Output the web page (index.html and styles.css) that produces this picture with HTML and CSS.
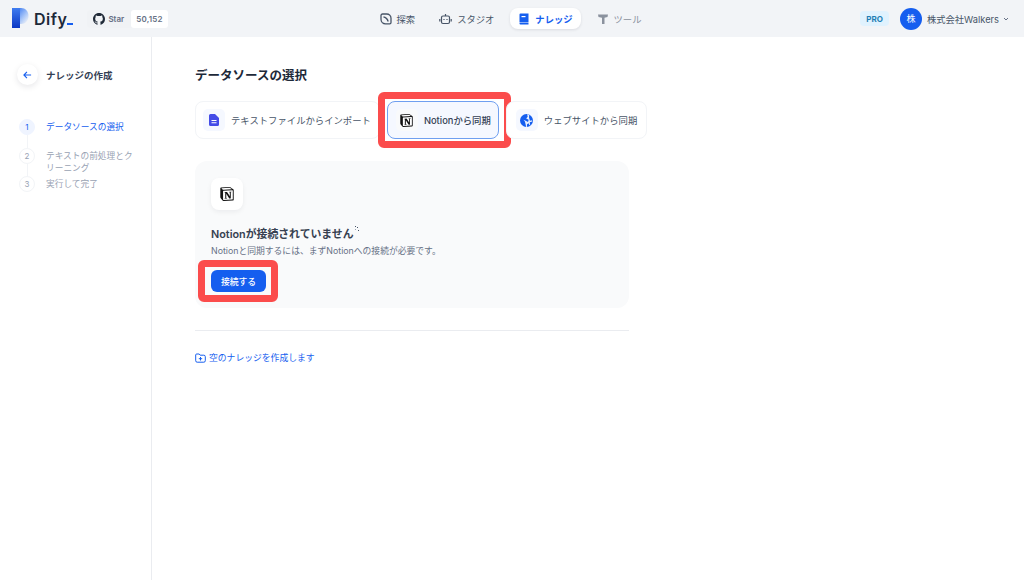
FILE: index.html
```html
<!DOCTYPE html>
<html lang="ja">
<head>
    <meta charset="UTF-8">
    <title>Dify ナレッジの作成</title>
    <link rel="stylesheet" href="styles.css">
</head>
<body>

<header class="topbar">
    <div class="brand">
        <svg class="logo-mark" width="17" height="20" viewBox="0 0 17 20">
            <defs>
                <linearGradient id="logoStem" x1="0" y1="0" x2="0" y2="1">
                    <stop offset="0" stop-color="#3f7cf0"/>
                    <stop offset="1" stop-color="#0b37c4"/>
                </linearGradient>
                <linearGradient id="logoBowl" x1="0" y1="0" x2="0.8" y2="1">
                    <stop offset="0" stop-color="#3f7cf0"/>
                    <stop offset="0.6" stop-color="#a9c6f8"/>
                    <stop offset="1" stop-color="#f2f4f7"/>
                </linearGradient>
            </defs>
            <path d="M6 0h3c4.500 0 7.500 3.500 7.500 8s-3 8-7.500 8H6z" fill="url(#logoBowl)"/>
            <rect x="0" y="0" width="8" height="20" fill="url(#logoStem)"/>
        </svg>
        <span class="logo-text">Dify<span class="logo-dash"></span></span>
        <div class="github">
            <span class="star">
                <svg width="12" height="12" viewBox="0 0 16 16"><path fill="#1f2937" d="M8 0C3.580 0 0 3.580 0 8c0 3.540 2.290 6.530 5.470 7.590.4.070.55-.17.55-.38 0-.19-.01-.82-.01-1.490-2.010.370-2.530-.49-2.690-.94-.09-.23-.48-.94-.82-1.130-.28-.15-.68-.52-.01-.53.63-.01 1.080.58 1.230.82.720 1.210 1.870.870 2.330.66.070-.52.280-.87.510-1.070-1.780-.2-3.640-.89-3.640-3.950 0-.87.31-1.590.82-2.150-.08-.2-.36-1.020.08-2.120 0 0 .67-.21 2.200.82a7.600 7.600 0 0 1 4 0c1.530-1.040 2.200-.82 2.200-.82.44 1.100.16 1.920.08 2.120.51.560.82 1.270.82 2.150 0 3.070-1.870 3.750-3.650 3.950.29.250.54.730.54 1.480 0 1.070-.01 1.930-.01 2.200 0 .21.15.46.55.38A8.010 8.010 0 0 0 16 8c0-4.420-3.580-8-8-8z"/></svg>
                Star
            </span>
            <span class="count">50,152</span>
        </div>
    </div>

    <nav class="mainnav">
        <a class="nav-item explore">
            <svg width="12" height="12" viewBox="0 0 12 12" fill="none" stroke="#475467" stroke-width="1.300"><path d="M2.500 1h4.200A4.300 4.300 0 0 1 11 5.300v4.200a1.300 1.300 0 0 1-1.300 1.300H5.500A4.500 4.500 0 0 1 1 6.300V2.500A1.500 1.500 0 0 1 2.500 1z"/><path d="M3.500 4c2 0 4.500 2.500 4.500 4.500" stroke-width="1.500"/></svg>
            探索
        </a>
        <a class="nav-item">
            <svg width="13" height="12" viewBox="0 0 13 12" fill="none" stroke="#475467" stroke-width="1.200"><rect x="2.500" y="3" width="8" height="7.500" rx="1.500"/><path d="M6.500 3V1M.8 6v2.500M12.200 6v2.500"/><path d="M5 6v1M8 6v1"/></svg>
            スタジオ
        </a>
        <a class="nav-item active">
            <svg width="12" height="12" viewBox="0 0 12 12"><path fill="#155eef" d="M1.500 1.500A1 1 0 0 1 2.500.5h8v8.500h-8a1 1 0 0 0-1 .6z"/><path fill="#155eef" d="M1.500 10a1 1 0 0 1 1-.5h8v2h-8a1 1 0 0 1-1-1z"/><rect x="3.500" y="3" width="4" height="1.200" fill="#fff"/></svg>
            ナレッジ
        </a>
        <a class="nav-item muted">
            <svg width="12" height="12" viewBox="0 0 12 12"><path fill="#8b929e" d="M1 1.500h10l-.5 2.500-3 .8v6.200H5V4.800L1.500 4z"/></svg>
            ツール
        </a>
    </nav>

    <div class="account">
        <span class="plan">PRO</span>
        <span class="avatar">株</span>
        <span class="org">株式会社Walkers</span>
        <svg width="8" height="8" viewBox="0 0 8 8" fill="none" stroke="#667085" stroke-width="1"><path d="M2 3l2 2 2-2"/></svg>
    </div>
</header>

<div class="page">
    <aside class="sidebar">
        <div class="side-title">
            <span class="back">
                <svg width="9" height="8" viewBox="0 0 11 10" fill="none" stroke="#155eef" stroke-width="1.400"><path d="M10 5H1.200M4.800 1.200L1 5l3.800 3.800"/></svg>
            </span>
            ナレッジの作成
        </div>
        <ol class="steps">
            <li class="step current"><span class="num">1</span><span class="step-label">データソースの選択</span></li>
            <li class="step"><span class="num">2</span><span class="step-label">テキストの前処理とクリーニング</span></li>
            <li class="step"><span class="num">3</span><span class="step-label">実行して完了</span></li>
        </ol>
    </aside>

    <main class="content">
        <h1 class="heading">データソースの選択</h1>

        <div class="tabs">
            <div class="tab first">
                <span class="tab-icon">
                    <svg width="10" height="12" viewBox="0 0 10 12"><path fill="#444ce7" d="M1.500 0H6l4 4v6.500A1.500 1.500 0 0 1 8.500 12h-7A1.500 1.500 0 0 1 0 10.500v-9A1.500 1.500 0 0 1 1.500 0z"/><path fill="#fff" d="M2.500 6h5v1h-5zM2.500 8.200h5v1h-5z"/></svg>
                </span>
                テキストファイルからインポート
            </div>
            <div class="tab selected marked">
                <span class="tab-icon">
                    <svg width="13" height="13" viewBox="0 0 24 24"><path fill="#fff" d="M2 2l16-1.500 5 4V22L6 23.500 1.500 18z"/><path fill="#111" d="M4.459 4.208c.746.606 1.026.56 2.428.466l13.215-.793c.28 0 .047-.28-.046-.326L17.860 1.968c-.42-.326-.981-.7-2.055-.607L3.010 2.295c-.466.046-.56.28-.374.466zm.793 3.080v13.904c0 .747.373 1.027 1.214.98l14.523-.84c.841-.046.935-.56.935-1.167V6.354c0-.606-.233-.933-.748-.887l-15.177.887c-.56.047-.747.327-.747.933zm14.337.745c.093.42 0 .84-.42.888l-.7.14v10.264c-.608.327-1.168.514-1.635.514-.748 0-.935-.234-1.495-.933l-4.577-7.186v6.952L12.210 19s0 .84-1.168.84l-3.222.186c-.093-.186 0-.653.327-.746l.84-.233V9.854L7.822 9.760c-.094-.42.14-1.026.793-1.073l3.456-.233 4.764 7.279v-6.440l-1.215-.139c-.093-.514.28-.887.747-.933zM1.936 1.035l13.310-.98c1.634-.14 2.055-.047 3.082.7l4.249 2.986c.7.513.934.653.934 1.213v16.378c0 1.026-.373 1.634-1.680 1.726l-15.458.934c-.98.047-1.448-.093-1.962-.747l-3.129-4.060c-.56-.747-.793-1.306-.793-1.960V2.667c0-.839.374-1.540 1.447-1.632z"/></svg>
                </span>
                Notionから同期
            </div>
            <div class="tab last">
                <span class="tab-icon">
                    <svg width="13" height="13" viewBox="0 0 12 12"><circle cx="6" cy="6" r="6" fill="#155eef"/><path fill="#e8f0fe" d="M6.600.2l.5 2.300-1.400 1.700 2.300 1.100-.6 2L5.700 6.500 3.200 5.300 4.500 7l.6 2.200.6 2.800h.7L6.500 9.500 8 8.500l.5 1.800.9-.6-.4-2 2.300-.8-.1-1.200-2 .5-.5-1.700L8.300 3.200 8.500.7z"/></svg>
                </span>
                ウェブサイトから同期
            </div>
        </div>

        <section class="connect-card">
            <span class="card-icon">
                <svg width="14" height="14" viewBox="0 0 24 24"><path fill="#fff" d="M2 2l16-1.500 5 4V22L6 23.500 1.500 18z"/><path fill="#111" d="M4.459 4.208c.746.606 1.026.56 2.428.466l13.215-.793c.28 0 .047-.28-.046-.326L17.860 1.968c-.42-.326-.981-.7-2.055-.607L3.010 2.295c-.466.046-.56.28-.374.466zm.793 3.080v13.904c0 .747.373 1.027 1.214.98l14.523-.84c.841-.046.935-.56.935-1.167V6.354c0-.606-.233-.933-.748-.887l-15.177.887c-.56.047-.747.327-.747.933zm14.337.745c.093.42 0 .84-.42.888l-.7.14v10.264c-.608.327-1.168.514-1.635.514-.748 0-.935-.234-1.495-.933l-4.577-7.186v6.952L12.210 19s0 .84-1.168.84l-3.222.186c-.093-.186 0-.653.327-.746l.84-.233V9.854L7.822 9.760c-.094-.42.14-1.026.793-1.073l3.456-.233 4.764 7.279v-6.440l-1.215-.139c-.093-.514.28-.887.747-.933zM1.936 1.035l13.310-.98c1.634-.14 2.055-.047 3.082.7l4.249 2.986c.7.513.934.653.934 1.213v16.378c0 1.026-.373 1.634-1.680 1.726l-15.458.934c-.98.047-1.448-.093-1.962-.747l-3.129-4.060c-.56-.747-.793-1.306-.793-1.960V2.667c0-.839.374-1.540 1.447-1.632z"/></svg>
            </span>
            <div class="card-title">Notionが接続されていません<span class="sparkle"></span></div>
            <div class="card-desc">Notionと同期するには、まずNotionへの接続が必要です。</div>
            <button class="connect marked">接続する</button>
        </section>

        <hr class="divider">

        <a class="empty-link">
            <svg width="11" height="10" viewBox="0 0 11 10" fill="none" stroke="#155eef" stroke-width="1"><path d="M.7 2a1 1 0 0 1 1-1h2.500l1 1.200h3.600a1.500 1.500 0 0 1 1.500 1.500v4a1.500 1.500 0 0 1-1.500 1.500H2.200A1.500 1.500 0 0 1 .7 7.700z"/><path d="M5.500 4v3.500M3.800 5.700h3.400"/></svg>
            空のナレッジを作成します
        </a>
    </main>
</div>

</body>
</html>
```

FILE: styles.css
```css
* {
    box-sizing: border-box;
}
body {
    font-family: Inter, "Noto Sans CJK JP", sans-serif;
    margin: 0;
    width: 1024px;
    height: 580px;
    overflow: hidden;
    background-color: #fff;
    color: #1d2939;
}
.topbar {
    display: grid;
    grid-template-columns: 1fr auto 1fr;
    align-items: center;
    height: 37px;
    padding: 0 14px 0 12px;
    background-color: #f2f4f7;
}
.brand {
    display: flex;
    align-items: center;
}
.logo-mark {
    margin-top: -1px;
}
.logo-text {
    margin-left: 5px;
    font-size: 16px;
    font-weight: 600;
    letter-spacing: 0.5px;
    color: #1d2939;
    position: relative;
    padding-right: 6px;
}
.logo-dash {
    position: absolute;
    right: 0;
    bottom: 4px;
    width: 6px;
    height: 2px;
    background-color: #155eef;
}
.github {
    display: flex;
    align-items: center;
    height: 18px;
    margin-left: 14px;
    font-size: 8px;
    font-weight: 600;
    color: #667085;
    border-radius: 4px;
    background-color: #f0f2f5;
}
.star {
    display: flex;
    align-items: center;
    gap: 3px;
    padding: 0 7px 0 6px;
}
.count {
    display: flex;
    align-items: center;
    height: 18px;
    padding: 0 5px;
    background-color: #fff;
    border-radius: 3px;
    letter-spacing: 0.2px;
}
.mainnav {
    display: flex;
    align-items: center;
    gap: 16px;
    margin-left: -1px;
}
.nav-item {
    display: flex;
    align-items: center;
    gap: 5px;
    height: 21px;
    font-size: 9.300px;
    color: #475467;
}
.nav-item.explore {
    margin-right: 8px;
}
.nav-item.active {
    padding: 0 8px;
    color: #155eef;
    font-weight: 600;
    background-color: #fff;
    border-radius: 8px;
    box-shadow: 0 1px 3px rgba(16, 24, 40, 0.1);
}
.nav-item.muted {
    color: #8b929e;
}
.account {
    display: flex;
    align-items: center;
    justify-content: flex-end;
    font-size: 9.300px;
    color: #475467;
}
.plan {
    display: flex;
    align-items: center;
    height: 15px;
    padding: 0 6px;
    margin-right: 11px;
    font-size: 8px;
    font-weight: 700;
    color: #1f7fb5;
    background-color: #e0f2fe;
    border-radius: 4px;
}
.avatar {
    display: flex;
    align-items: center;
    justify-content: center;
    width: 22px;
    height: 22px;
    margin-right: 5px;
    font-size: 9px;
    color: #fff;
    background-color: #155eef;
    border-radius: 50%;
}
.org {
    margin-right: 3px;
}
.page {
    display: flex;
    height: 543px;
}
.sidebar {
    flex: none;
    width: 152px;
    padding: 27px 0 0 19px;
    border-right: 1px solid #eaecf0;
}
.side-title {
    display: flex;
    align-items: center;
    gap: 8px;
    font-size: 9.500px;
    font-weight: 600;
    color: #344054;
}
.back {
    display: flex;
    align-items: center;
    justify-content: center;
    width: 21px;
    height: 21px;
    margin-left: -2px;
    border-radius: 50%;
    background-color: #fff;
    box-shadow: 0 2px 6px rgba(16, 24, 40, 0.1);
}
.steps {
    list-style: none;
    margin: 34px 0 0;
    padding: 0;
    width: 118px;
}
.step {
    display: flex;
    gap: 11px;
    font-size: 8.700px;
    line-height: 12px;
    color: #98a2b3;
    position: relative;
    margin-bottom: 2px;
}
.step:not(:last-child)::before {
    content: "";
    position: absolute;
    left: 8px;
    top: 16px;
    width: 1px;
    height: 13px;
    background-color: #f2f4f7;
}
.step .num {
    flex: none;
    display: flex;
    align-items: center;
    justify-content: center;
    width: 16px;
    height: 16px;
    font-size: 8px;
    color: #98a2b3;
    border: 1px solid #f2f4f7;
    border-radius: 50%;
    background-color: #fff;
}
.step .step-label {
    padding-top: 2px;
}
.step.current {
    color: #155eef;
    margin-bottom: 13px;
}
.step.current .num {
    color: #155eef;
    background-color: #eff4ff;
    border-color: #eff4ff;
}
.content {
    flex: 1;
    padding: 31px 0 0 43px;
}
.heading {
    margin: 0;
    font-size: 12.500px;
    line-height: 16px;
    font-weight: 600;
    color: #1d2939;
}
.tabs {
    display: flex;
    gap: 7px;
    margin-top: 17px;
}
.tab {
    display: flex;
    align-items: center;
    gap: 6px;
    height: 38px;
    padding: 0 7px 0 8px;
    font-size: 9.350px;
    color: #475467;
    background-color: #fff;
    border: 1px solid #f2f4f7;
    border-radius: 8px;
    position: relative;
}
.tab.first {
    padding: 0 8px 0 7px;
}
.tab.last {
    padding: 0 9px 0 9px;
}
.tab.selected {
    font-weight: 500;
    background-color: #f5f8ff;
    border-color: #6f9ff0;
    color: #344054;
}
.tab-icon {
    flex: none;
    display: flex;
    align-items: center;
    justify-content: center;
    width: 22px;
    height: 22px;
    background-color: #f5f8ff;
    border-radius: 5px;
}
.selected .tab-icon {
    background-color: #f9fafb;
}
/* 赤い枠は説明用の注釈 */
.marked::after {
    content: "";
    position: absolute;
    top: -10px;
    right: -13px;
    bottom: -10px;
    left: -10px;
    border: 7px solid #fb4c4c;
    border-radius: 6px;
    pointer-events: none;
}
.connect-card {
    width: 434px;
    height: 147px;
    margin-top: 22px;
    padding: 17px 16px 0;
    background-color: #f9fafb;
    border-radius: 12px;
}
.card-icon {
    display: flex;
    align-items: center;
    justify-content: center;
    width: 32px;
    height: 32px;
    background-color: #fff;
    border-radius: 8px;
    box-shadow: 0 2px 5px rgba(16, 24, 40, 0.06);
}
.card-title {
    margin-top: 17px;
    font-size: 10.850px;
    line-height: 14px;
    font-weight: 600;
    color: #374151;
    position: relative;
    width: max-content;
}
.sparkle {
    position: absolute;
    top: -1px;
    right: -2px;
    width: 1px;
    height: 1px;
    background-color: #475467;
    box-shadow: 2px 1px 0 #475467, 3px 4px 0 #475467, 0 3px 0 #98a2b3;
}
.card-desc {
    margin-top: 4px;
    font-size: 8.800px;
    line-height: 12px;
    color: #667085;
}
.connect {
    display: block;
    position: relative;
    width: 55px;
    height: 22px;
    margin-top: 13px;
    padding: 0;
    font-family: inherit;
    font-size: 8.800px;
    font-weight: 500;
    color: #fff;
    background-color: #155eef;
    border: none;
    border-radius: 6px;
}
.connect.marked::after {
    top: -10px;
    right: -12px;
    bottom: -10px;
    left: -13px;
}
.divider {
    width: 434px;
    height: 1px;
    margin: 22px 0 0;
    border: none;
    background-color: #eaecf0;
}
.empty-link {
    display: flex;
    align-items: center;
    gap: 3px;
    margin-top: 21px;
    font-size: 8.800px;
    line-height: 12px;
    color: #155eef;
}
```
